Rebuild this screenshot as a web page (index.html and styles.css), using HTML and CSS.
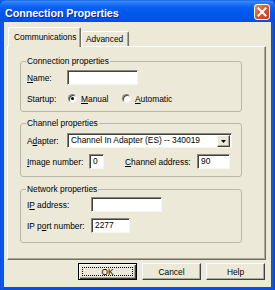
FILE: index.html
```html
<!DOCTYPE html>
<html>
<head>
<meta charset="utf-8">
<link rel="stylesheet" href="styles.css">
</head>
<body>
<div class="window">
  <div class="titlebar">
    <span class="title">Connection Properties</span>
    <span class="close"><svg width="16" height="16" viewBox="0 0 16 16"><defs><linearGradient id="cg" x1="0" y1="0" x2="1" y2="1"><stop offset="0" stop-color="#F08A6C"/><stop offset="0.5" stop-color="#E0522E"/><stop offset="1" stop-color="#C43A18"/></linearGradient></defs><rect x="0.5" y="0.5" width="15" height="15" rx="2.5" fill="url(#cg)" stroke="#fff"/><path d="M4.5 4.5 L11.5 11.5 M11.5 4.5 L4.5 11.5" stroke="#fff" stroke-width="2" stroke-linecap="square"/></svg></span>
  </div>
  <div class="client">
    <div class="tabs">
      <span class="tab active">Communications</span>
      <span class="tab">Advanced</span>
    </div>
    <div class="panel">
      <fieldset class="group g1">
        <legend>Connection properties</legend>
        <div class="row">
          <span class="lbl lbl-a"><u>N</u>ame:</span>
          <span class="input w-name"></span>
        </div>
        <div class="row">
          <span class="lbl lbl-s">Startup:</span>
          <span class="radio on"></span><span class="opt"><u>M</u>anual</span>
          <span class="radio r2"></span><span class="opt"><u>A</u>utomatic</span>
        </div>
      </fieldset>
      <fieldset class="group g2">
        <legend>Channel properties</legend>
        <div class="row">
          <span class="lbl lbl-a">A<u>d</u>apter:</span>
          <span class="input combo"><span class="combo-text">Channel In Adapter (ES) -- 340019</span><span class="drop"><svg width="5" height="3" viewBox="0 0 5 3"><path d="M0 0H5L2.5 3Z" fill="#000"/></svg></span></span>
        </div>
        <div class="row">
          <span class="lbl lbl-i"><u>I</u>mage number:</span>
          <span class="input w-img">0</span>
          <span class="lbl lbl-c"><u>C</u>hannel address:</span>
          <span class="input w-ch">90</span>
        </div>
      </fieldset>
      <fieldset class="group g3">
        <legend>Network properties</legend>
        <div class="row">
          <span class="lbl lbl-n">I<u>P</u> address:</span>
          <span class="input w-ip"></span>
        </div>
        <div class="row">
          <span class="lbl lbl-n">IP p<u>o</u>rt number:</span>
          <span class="input w-port">2277</span>
        </div>
      </fieldset>
    </div>
    <div class="buttons">
      <span class="btn default"><span class="focus">OK</span></span>
      <span class="btn">Cancel</span>
      <span class="btn">Help</span>
    </div>
  </div>
</div>
</body>
</html>
```

FILE: styles.css
```css
* { box-sizing: border-box; }
html, body { margin: 0; padding: 0; }
body {
  width: 275px;
  height: 290px;
  overflow: hidden;
  font-family: "Liberation Sans", Arial, sans-serif;
  font-size: 8.4px;
  color: #000;
  background: #fff;
}
.window {
  width: 275px;
  height: 290px;
  display: flex;
  flex-direction: column;
  background: linear-gradient(to right, #0A4FE3 0, #0A5BF0 2px, #0A4FE3 4px, #0A4FE3 271px, #0A5BF0 273px, #0340C8 275px);
}
.titlebar {
  height: 22px;
  flex: none;
  display: flex;
  align-items: flex-start;
  justify-content: space-between;
  background: linear-gradient(to bottom, #0853E0 0, #3D8FFB 1px, #2579F8 3px, #0B61F2 7px, #0058EE 12px, #0055E8 18px, #0150E0 22px);
  border-radius: 6px 6px 0 0;
}
.title {
  color: #fff;
  font-weight: bold;
  font-size: 10.8px;
  line-height: 22px;
  padding-left: 5px;
  margin-top: 2px;
  text-shadow: 1px 1px 0 #0A2A90;
  letter-spacing: -0.1px;
}
.close {
  width: 16px;
  height: 16px;
  margin: 4px 5px 0 0;
  display: block;
}
.close svg { display: block; }
.client {
  flex: 1;
  margin: 0 4px 3px 4px;
  background: #ECE9D8;
  padding: 5px 5px 0 3px;
  display: flex;
  flex-direction: column;
}
.tabs {
  display: flex;
  align-items: flex-end;
  padding-left: 1px;
  height: 19px;
  flex: none;
}
.tab {
  height: 15px;
  line-height: 14px;
  padding: 0 5px 0 4px;
  background: #ECE9D8;
  border-top: 1px solid #fff;
  border-left: 1px solid #fff;
  border-right: 1px solid #716F64;
  box-shadow: inset -1px 0 0 #ACA899;
  border-radius: 2px 2px 0 0;
}
.tab.active {
  height: 20px;
  line-height: 18px;
  padding: 0 5px 0 5px;
  margin-bottom: -1px;
  position: relative;
  z-index: 1;
  width: 73px;
}
.panel {
  flex: none;
  height: 214px;
  background: #ECE9D8;
  border-top: 1px solid #fff;
  border-left: 1px solid #fff;
  border-right: 1px solid #716F64;
  border-bottom: 1px solid #716F64;
  box-shadow: inset -1px -1px 0 #ACA899;
  padding: 9px 0 0 12px;
  display: flex;
  flex-direction: column;
}
.group {
  width: 222px;
  margin: 0;
  border: 1px solid #BAB7A8;
  border-radius: 3px;
  padding: 0 6px;
  display: flex;
  flex-direction: column;
  gap: 6px;
  min-width: 0;
}
.group legend {
  padding: 0 1px;
  margin-left: -1px;
  line-height: 10px;
  height: 10px;
}
.g1 { padding-top: 4px; padding-bottom: 5px; }
.g2 { margin-top: 6px; padding-top: 5px; padding-bottom: 7px; }
.g3 { margin-top: 7px; padding-top: 3px; padding-bottom: 9px; }
.row {
  display: flex;
  align-items: center;
  height: 15px;
}
.lbl { flex: none; white-space: nowrap; }
.lbl-a { width: 40px; }
.lbl-s { width: 41px; }
.lbl-i { width: 62px; }
.lbl-c { width: 72px; margin-left: 21px; }
.lbl-n { width: 64px; }
.input {
  flex: none;
  height: 15px;
  background: #fff;
  border: 1px solid;
  border-color: #8A887C #F6F5EE #F6F5EE #8A887C;
  box-shadow: inset 1px 1px 0 #404040;
  line-height: 13px;
  padding-left: 3px;
}
.w-name { width: 71px; }
.w-img { width: 15px; }
.w-ch { width: 33px; }
.w-ip { width: 71px; }
.w-port { width: 39px; }
.combo {
  width: 165px;
  display: flex;
  align-items: center;
  justify-content: space-between;
  padding-right: 1px;
}
.combo-text { white-space: nowrap; }
.drop {
  width: 13px;
  height: 12px;
  margin-top: 1px;
  background: #ECE9D8;
  border-top: 1px solid #fff;
  border-left: 1px solid #fff;
  border-right: 1px solid #404040;
  border-bottom: 1px solid #404040;
  box-shadow: inset -1px -1px 0 #ACA899;
  display: flex;
  align-items: center;
  justify-content: center;
}
.drop svg { display: block; }
.radio {
  flex: none;
  width: 9px;
  height: 9px;
  border-radius: 50%;
  background: #fff;
  border: 1px solid;
  border-color: #808080 #F4F3EE #F4F3EE #808080;
  box-shadow: inset 1px 1px 0 #404040;
  margin-right: 4px;
  display: flex;
  align-items: center;
  justify-content: center;
}
.radio.on::after {
  content: "";
  width: 3px;
  height: 3px;
  border-radius: 50%;
  background: #000;
}
.r2 { margin-left: 13.5px; }
.opt { white-space: nowrap; }
.buttons {
  flex: none;
  display: flex;
  justify-content: flex-end;
  gap: 5px;
  padding-right: 1px;
  margin-top: 3px;
}
.btn {
  width: 59px;
  height: 17px;
  background: #ECE9D8;
  border-top: 1px solid #fff;
  border-left: 1px solid #fff;
  border-right: 1px solid #404040;
  border-bottom: 1px solid #404040;
  box-shadow: inset -1px -1px 0 #ACA899;
  display: flex;
  align-items: center;
  justify-content: center;
  line-height: 12px;
}
.btn.default {
  border: 1px solid #000;
  box-shadow: inset 1px 1px 0 #fff, inset -1px -1px 0 #404040, inset -2px -2px 0 #ACA899;
  padding: 3px;
}
.focus {
  width: 100%;
  height: 100%;
  border: 1px dotted #000;
  display: flex;
  align-items: center;
  justify-content: center;
}
```
